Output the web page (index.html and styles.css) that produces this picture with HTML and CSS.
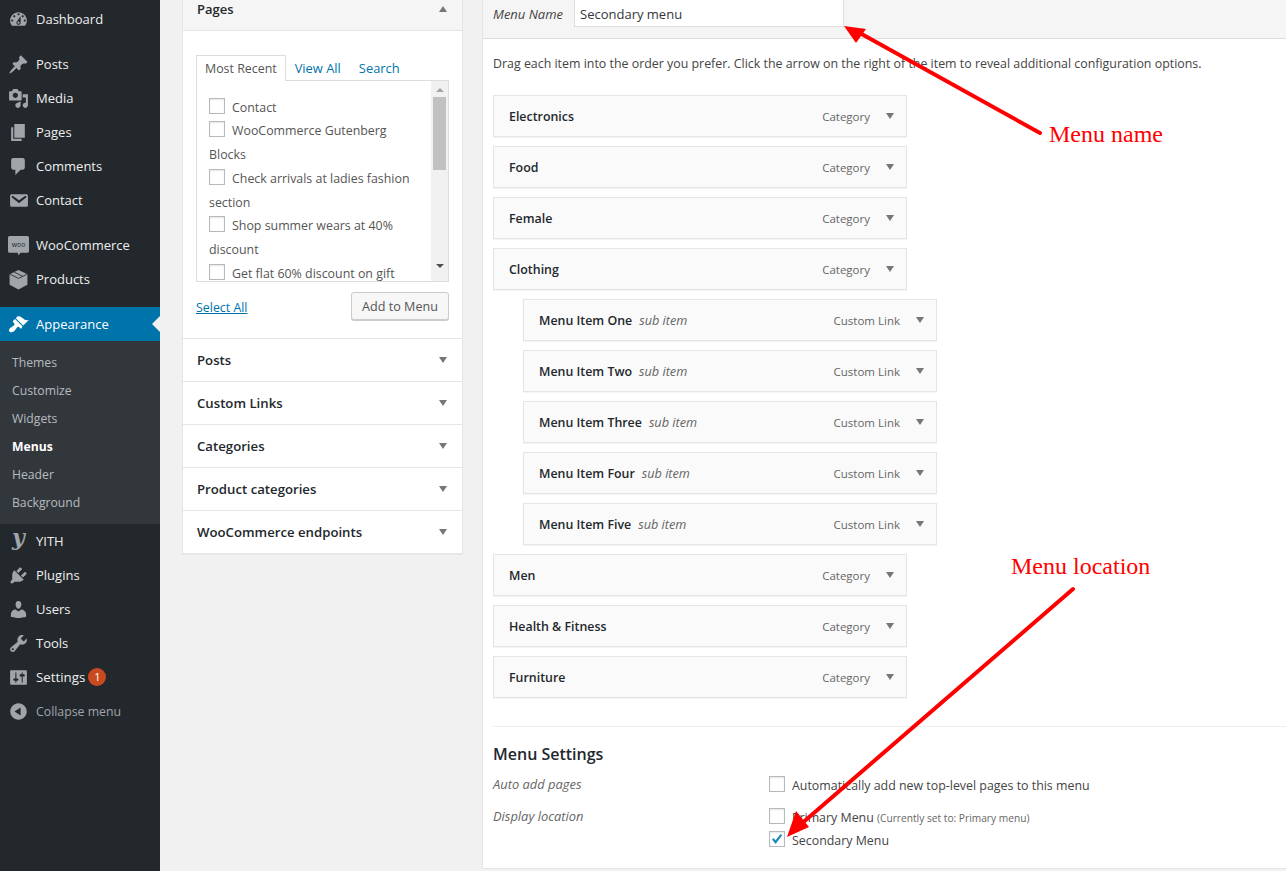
FILE: index.html
```html
<!DOCTYPE html>
<html lang="en">
<head>
<meta charset="utf-8">
<title>Menus</title>
<link rel="stylesheet" href="styles.css">
</head>
<body>
<div class="page">
  <nav class="sidebar">
    <a class="nav-item"><svg class="ico" viewBox="0 0 20 20"><path d="M3.76 16h12.48c1.1-1.37 1.76-3.11 1.76-5 0-4.42-3.58-8-8-8s-8 3.58-8 8c0 1.89.66 3.63 1.76 5zM10 4c.55 0 1 .45 1 1s-.45 1-1 1-1-.45-1-1 .45-1 1-1zM6 6c.55 0 1 .45 1 1s-.45 1-1 1-1-.45-1-1 .45-1 1-1zm8 0c.55 0 1 .45 1 1s-.45 1-1 1-1-.45-1-1 .45-1 1-1zm-5.37 5.55L12 7v6c0 1.1-.9 2-2 2s-2-.9-2-2c0-.57.24-1.08.63-1.45zM4 10c.55 0 1 .45 1 1s-.45 1-1 1-1-.45-1-1 .45-1 1-1zm12 0c.55 0 1 .45 1 1s-.45 1-1 1-1-.45-1-1 .45-1 1-1zm-5 3c0-.55-.45-1-1-1s-1 .45-1 1 .45 1 1 1 1-.45 1-1z"/></svg>Dashboard</a>
    <div class="nav-gap"></div>
    <a class="nav-item"><svg class="ico" viewBox="0 0 20 20"><path d="M10.44 3.02l1.82-1.82 6.36 6.35-1.83 1.82c-1.05-.68-2.48-.57-3.41.36l-.75.75c-.92.93-1.04 2.35-.35 3.41l-1.83 1.82-2.41-2.41-2.8 2.79c-.42.42-3.38 2.71-3.8 2.29s1.86-3.39 2.28-3.81l2.79-2.79L4.1 9.36l1.83-1.82c1.05.69 2.48.57 3.4-.36l.75-.75c.93-.92 1.05-2.35.36-3.41z"/></svg>Posts</a>
    <a class="nav-item"><svg class="ico" viewBox="0 0 20 20"><path d="M13 11V4c0-.55-.45-1-1-1h-1.67L9 1H5L3.67 3H2c-.55 0-1 .45-1 1v7c0 .55.45 1 1 1h10c.55 0 1-.45 1-1zM7 4.500c1.380 0 2.500 1.120 2.500 2.500S8.380 9.500 7 9.500 4.500 8.380 4.500 7 5.620 4.500 7 4.500zM14 6h5v10.500c0 1.380-1.120 2.500-2.500 2.500S14 17.880 14 16.500s1.120-2.500 2.500-2.500c.17 0 .34.02.5.05V9h-3V6zm-4 8.050V13h2v3.500c0 1.380-1.120 2.500-2.500 2.500S7 17.880 7 16.500 8.120 14 9.500 14c.17 0 .34.02.5.05z"/></svg>Media</a>
    <a class="nav-item"><svg class="ico" viewBox="0 0 20 20"><path d="M6 15V2h10v13H6zm-1 1h8v2H3V5h2v11z"/></svg>Pages</a>
    <a class="nav-item"><svg class="ico" viewBox="0 0 20 20"><path d="M5 2h9c1.1 0 2 .9 2 2v7c0 1.1-.9 2-2 2h-2l-5 5v-5H5c-1.1 0-2-.9-2-2V4c0-1.1.9-2 2-2z"/></svg>Comments</a>
    <a class="nav-item"><svg class="ico" viewBox="0 0 20 20"><path d="M3.87 4h13.25C18.37 4 19 4.59 19 5.79v8.42c0 1.19-.63 1.79-1.88 1.79H3.87c-1.25 0-1.88-.6-1.88-1.79V5.79c0-1.2.63-1.79 1.88-1.79zm6.62 8.6l6.74-5.53c.24-.2.43-.66.13-1.07-.29-.41-.82-.42-1.17-.17l-5.7 3.86L4.8 5.83c-.35-.25-.88-.24-1.17.17-.3.41-.11.87.13 1.07z"/></svg>Contact</a>
    <div class="nav-gap"></div>
    <a class="nav-item"><svg class="ico" viewBox="0 0 20 20"><path d="M1.500 1h17c.8 0 1.500.7 1.500 1.500v13c0 .8-.7 1.500-1.500 1.500H12l-2 2.400L9.200 17H1.500C.7 17 0 16.300 0 15.500v-13C0 1.700.7 1 1.500 1z"/><text class="woo-mark" x="10" y="11.500" text-anchor="middle">woo</text></svg>WooCommerce</a>
    <a class="nav-item"><svg class="ico" viewBox="0 0 20 20"><path d="M10 1l8.500 4v10L10 19.500 1.500 15V5z"/><path class="ico-cut" d="M2 5l8 4 8-4M6 3l8 4"/></svg>Products</a>
    <div class="nav-gap"></div>
    <a class="nav-item nav-current"><svg class="ico" viewBox="0 0 20 20"><path d="M14.48 11.06L7.41 3.99l1.5-1.5c.5-.56 2.3-.47 3.51.32 1.21.8 1.43 1.28 2.91 2.1 1.18.64 2.45 1.26 4.45.85zm-.71.71L6.7 4.7 4.93 6.47c-.39.39-.39 1.02 0 1.41l1.06 1.06c.39.39.39 1.03 0 1.42-.6.6-1.43 1.11-2.21 1.69-.35.26-.7.53-1.01.84C1.43 13.23.4 15.79 1.51 16.9s3.67-.13 5.01-1.27c.31-.31.58-.66.84-1.01.58-.78 1.09-1.61 1.69-2.21.39-.39 1.02-.39 1.41 0l1.06 1.06c.39.39 1.02.39 1.41 0z"/></svg>Appearance</a>
    <div class="submenu">
      <a class="sub-link">Themes</a>
      <a class="sub-link">Customize</a>
      <a class="sub-link">Widgets</a>
      <a class="sub-link sub-current">Menus</a>
      <a class="sub-link">Header</a>
      <a class="sub-link">Background</a>
    </div>
    <a class="nav-item"><svg class="ico" viewBox="0 0 20 20"><text class="yith-mark" x="10" y="13.500" text-anchor="middle">y</text></svg>YITH</a>
    <a class="nav-item"><svg class="ico" viewBox="0 0 20 20"><path d="M13.11 4.36L9.87 7.6 8 5.73l3.24-3.24c.35-.34 1.05-.2 1.56.32.52.51.66 1.21.31 1.55zm-8 1.77l.91-1.12 9.01 9.01-1.19.84c-.71.71-2.63 1.16-3.82 1.16H6.14L4.9 17.26c-.59.59-1.54.59-2.12 0-.59-.58-.59-1.53 0-2.12l1.24-1.24v-3.88c0-1.13.4-3.19 1.09-3.89zm7.26 3.97l3.24-3.24c.34-.35 1.04-.21 1.55.31.52.51.66 1.21.31 1.55l-3.24 3.25z"/></svg>Plugins</a>
    <a class="nav-item"><svg class="ico" viewBox="0 0 20 20"><path d="M10 9.250c-2.270 0-2.730-3.440-2.730-3.440C7 4.020 7.820 2 9.970 2c2.160 0 2.980 2.020 2.710 3.810 0 0-.41 3.440-2.680 3.440zm0 2.570L12.720 10c2.390 0 4.520 2.330 4.520 4.530v2.490s-3.650 1.130-7.240 1.130c-3.650 0-7.240-1.130-7.240-1.130v-2.490c0-2.250 1.940-4.480 4.470-4.480z"/></svg>Users</a>
    <a class="nav-item"><svg class="ico" viewBox="0 0 20 20"><path d="M16.680 9.770c-1.340 1.340-3.300 1.670-4.950.99l-5.410 6.520c-.99.99-2.590.99-3.580 0s-.99-2.590 0-3.570l6.520-5.420c-.68-1.650-.35-3.610.99-4.950 1.280-1.280 3.120-1.620 4.720-1.060l-2.890 2.890 2.820 2.820 2.860-2.870c.53 1.580.18 3.390-1.080 4.650zM3.810 16.210c.4.390 1.040.39 1.430 0 .4-.4.4-1.040 0-1.430-.39-.4-1.030-.4-1.430 0-.39.39-.39 1.030 0 1.430z"/></svg>Tools</a>
    <a class="nav-item"><svg class="ico" viewBox="0 0 20 20"><path d="M18 16V4c0-.55-.45-1-1-1H3c-.55 0-1 .45-1 1v12c0 .55.45 1 1 1h14c.55 0 1-.45 1-1zM8 11h1c.55 0 1 .45 1 1s-.45 1-1 1H8v1.500c0 .28-.22.5-.5.5s-.5-.22-.5-.5V13H6c-.55 0-1-.45-1-1s.45-1 1-1h1V5.500c0-.28.22-.5.5-.5s.5.22.5.5V11zm5-2h-1c-.55 0-1-.45-1-1s.45-1 1-1h1V5.500c0-.28.22-.5.5-.5s.5.22.5.5V7h1c.55 0 1 .45 1 1s-.45 1-1 1h-1v5.500c0 .28-.22.5-.5.5s-.5-.22-.5-.5V9z"/></svg><span class="nav-wide">Settings</span><span class="badge">1</span></a>
    <a class="nav-item nav-collapse"><svg class="ico" viewBox="0 0 20 20"><path d="M10 2.160c4.330 0 7.840 3.510 7.840 7.840s-3.510 7.840-7.840 7.840S2.160 14.330 2.160 10 5.710 2.160 10 2.160zm2 11.720V6.120L6.180 9.970z"/></svg><span class="collapse-label">Collapse menu</span></a>
  </nav>

  <main class="content">
    <aside class="accordion">
      <section class="acc-open">
        <header class="acc-head acc-head-open"><span>Pages</span><i class="tri tri-up"></i></header>
        <div class="acc-body">
          <div class="tabs">
            <span class="tab tab-active">Most Recent</span>
            <span class="tab">View All</span>
            <span class="tab">Search</span>
          </div>
          <div class="picker">
            <div class="picker-list">
              <div class="pick-row"><i class="cb"></i>Contact</div>
              <div class="pick-row"><i class="cb"></i>WooCommerce Gutenberg Blocks</div>
              <div class="pick-row"><i class="cb"></i>Check arrivals at ladies fashion section</div>
              <div class="pick-row"><i class="cb"></i>Shop summer wears at 40% discount</div>
              <div class="pick-row"><i class="cb"></i>Get flat 60% discount on gift</div>
            </div>
            <div class="scrollbar">
              <i class="tri-sm tri-sm-up"></i>
              <div class="thumb"></div>
              <i class="tri-sm tri-sm-down"></i>
            </div>
          </div>
          <div class="acc-actions">
            <a class="select-all">Select All</a>
            <span class="btn">Add to Menu</span>
          </div>
        </div>
      </section>
      <header class="acc-head"><span>Posts</span><i class="tri"></i></header>
      <header class="acc-head"><span>Custom Links</span><i class="tri"></i></header>
      <header class="acc-head"><span>Categories</span><i class="tri"></i></header>
      <header class="acc-head"><span>Product categories</span><i class="tri"></i></header>
      <header class="acc-head"><span>WooCommerce endpoints</span><i class="tri"></i></header>
    </aside>

    <section class="editor">
      <header class="editor-head">
        <label class="name-label">Menu Name</label>
        <div class="name-input">Secondary menu</div>
      </header>
      <div class="editor-body">
        <p class="instructions">Drag each item into the order you prefer. Click the arrow on the right of the item to reveal additional configuration options.</p>
        <div class="menu-items">
          <div class="mi"><b>Electronics</b><span class="mi-type">Category</span><i class="tri mi-tri"></i></div>
          <div class="mi"><b>Food</b><span class="mi-type">Category</span><i class="tri mi-tri"></i></div>
          <div class="mi"><b>Female</b><span class="mi-type">Category</span><i class="tri mi-tri"></i></div>
          <div class="mi"><b>Clothing</b><span class="mi-type">Category</span><i class="tri mi-tri"></i></div>
          <div class="mi mi-sub"><b>Menu Item One</b><em>sub item</em><span class="mi-type">Custom Link</span><i class="tri mi-tri"></i></div>
          <div class="mi mi-sub"><b>Menu Item Two</b><em>sub item</em><span class="mi-type">Custom Link</span><i class="tri mi-tri"></i></div>
          <div class="mi mi-sub"><b>Menu Item Three</b><em>sub item</em><span class="mi-type">Custom Link</span><i class="tri mi-tri"></i></div>
          <div class="mi mi-sub"><b>Menu Item Four</b><em>sub item</em><span class="mi-type">Custom Link</span><i class="tri mi-tri"></i></div>
          <div class="mi mi-sub"><b>Menu Item Five</b><em>sub item</em><span class="mi-type">Custom Link</span><i class="tri mi-tri"></i></div>
          <div class="mi"><b>Men</b><span class="mi-type">Category</span><i class="tri mi-tri"></i></div>
          <div class="mi"><b>Health &amp; Fitness</b><span class="mi-type">Category</span><i class="tri mi-tri"></i></div>
          <div class="mi"><b>Furniture</b><span class="mi-type">Category</span><i class="tri mi-tri"></i></div>
        </div>
        <div class="settings">
          <h3>Menu Settings</h3>
          <div class="set-row">
            <span class="set-label set-label-first">Auto add pages</span>
            <div class="set-opts">
              <div class="opt opt-auto"><i class="cb"></i>Automatically add new top-level pages to this menu</div>
            </div>
          </div>
          <div class="set-row set-row-loc">
            <span class="set-label">Display location</span>
            <div class="set-opts">
              <div class="opt opt-first"><i class="cb"></i>Primary Menu <small>(Currently set to: Primary menu)</small></div>
              <div class="opt opt-second"><i class="cb cb-on"><svg viewBox="0 0 16 16"><path d="M3 8.500l1.500-1.400 2 2.200L11.600 3 13.200 4.200 6.600 13z"/></svg></i>Secondary Menu</div>
            </div>
          </div>
        </div>
      </div>
    </section>
  </main>

  <svg class="marks" viewBox="0 0 1286 871">
    <path class="mark-line" d="M1040 133L858 32"/>
    <path class="mark-head" d="M844 26L866 29L856 43Z"/>
    <path class="mark-line" d="M1073 589L800 825"/>
    <path class="mark-head" d="M787 837L796 811L809 827Z"/>
  </svg>
  <span class="note note-name">Menu name</span>
  <span class="note note-loc">Menu location</span>
</div>
</body>
</html>
```
FILE: styles.css
```css
* { box-sizing: border-box; }
html, body { margin: 0; padding: 0; }
body { background: #f1f1f1; color: #444; font: 12.400px/1.4 "Open Sans", "Noto Sans", sans-serif; }
.page { position: relative; display: flex; width: 1286px; height: 871px; overflow: hidden; }

/* Sidebar */
.sidebar { width: 160px; flex: none; background: #23282d; padding-top: 2px; }
.nav-item { display: flex; align-items: center; height: 34px; padding-left: 8px; color: #eee; font-size: 13px; }
.ico { width: 21px; height: 21px; margin-right: 7px; flex: none; fill: #a0a5aa; overflow: visible; }
.ico-cut { fill: none; stroke: #23282d; stroke-width: .8; }
.woo-mark { fill: #23282d; font: 6.500px "Open Sans", sans-serif; }
.yith-mark { fill: #a0a5aa; font: italic 700 21px "DejaVu Serif", serif; }
.nav-gap { height: 11px; }
.nav-current { position: relative; background: #0073aa; color: #fff; }
.nav-current .ico { fill: #fff; }
.nav-current::after { content: ""; position: absolute; right: 0; top: 9px; border: 8px solid transparent; border-left-width: 0; border-right-color: #f1f1f1; }
.submenu { background: #32373c; height: 183px; padding-top: 8px; }
.sub-link { display: block; height: 28px; line-height: 28px; padding-left: 12px; color: rgba(240,245,250,.7); font-size: 12.200px; }
.sub-current { color: #fff; font-weight: 700; }
.nav-wide { font-size: 13.300px; }
.badge { display: inline-block; width: 18px; height: 18px; margin-left: 3px; border-radius: 50%; background: #ca4a1f; color: #fff; font-size: 11px; line-height: 18px; text-align: center; }
.nav-collapse { color: #a0a5aa; font-size: 12.300px; }
.collapse-label { padding-top: 2px; }

/* Content */
.content { flex: 1; display: flex; align-items: flex-start; padding-left: 22px; min-width: 0; }
.accordion { width: 281px; flex: none; margin-right: 19px; background: #fff; border: 1px solid #e5e5e5; border-top: 0; box-shadow: 0 1px 1px rgba(0,0,0,.04); }
.acc-head { display: flex; align-items: center; justify-content: space-between; height: 43px; padding: 0 14px; color: #23282d; font-weight: 600; font-size: 13.200px; border-bottom: 1px solid #e5e5e5; background: #fff; }
.accordion > .acc-head:last-child { height: 42px; border-bottom: 0; }
.acc-head-open { height: 31px; align-items: flex-start; background: #f5f5f5; font-size: 13px; }
.tri { width: 0; height: 0; border: 4px solid transparent; border-top: 6px solid #72777c; border-bottom: 0; margin-right: 1px; }
.tri-up { border-top: 0; border-bottom: 6px solid #72777c; margin-top: 6px; }
.acc-body { height: 308px; padding: 24px 13px 0; border-bottom: 1px solid #e5e5e5; }
.tabs { display: flex; height: 26px; position: relative; z-index: 1; }
.tab { padding: 0 9px; font-size: 12.900px; line-height: 27px; color: #0073aa; }
.tab-active { font-size: 12.400px; color: #555; background: #fff; border: 1px solid #ddd; border-bottom: 0; height: 26px; line-height: 25px; padding: 0 8px; }
.picker { display: flex; height: 202px; margin-top: -1px; border: 1px solid #ddd; overflow: hidden; }
.picker-list { flex: 1; padding: 14.600px 12px 0; color: #555; min-width: 0; }
.pick-row { line-height: 23.750px; }
.cb { display: inline-block; position: relative; width: 16px; height: 16px; margin-right: 7px; vertical-align: -2px; background: #fff; border: 1px solid #b4b9be; box-shadow: inset 0 1px 2px rgba(0,0,0,.1); }
.scrollbar { width: 17px; flex: none; background: #f1f1f1; display: flex; flex-direction: column; align-items: center; }
.thumb { width: 13px; height: 73px; margin-top: 5px; background: #c1c1c1; }
.tri-sm { width: 0; height: 0; border: 4px solid transparent; }
.tri-sm-up { border-top: 0; border-bottom: 4px solid #a3a3a3; margin-top: 7px; }
.tri-sm-down { border-bottom: 0; border-top: 4px solid #505050; margin-top: 94px; }
.acc-actions { display: flex; align-items: center; justify-content: space-between; margin-top: 10px; }
.select-all { margin-top: 4px; color: #0073aa; text-decoration: underline; }
.btn { width: 98px; height: 28px; line-height: 27px; font-size: 12.600px; text-align: center; color: #555; background: #f7f7f7; border: 1px solid #ccc; border-radius: 3px; box-shadow: 0 1px 0 #ccc; }

/* Editor */
.editor { flex: 1; min-width: 0; height: 869px; background: #fff; border-left: 1px solid #e5e5e5; border-bottom: 1px solid #e5e5e5; }
.editor-head { display: flex; align-items: flex-start; height: 39px; padding-left: 10px; background: #f5f5f5; border-bottom: 1px solid #ddd; }
.name-label { width: 81px; font-size: 13px; line-height: 28px; font-style: italic; color: #444; }
.name-input { width: 270px; height: 27px; padding-left: 5px; font-size: 13px; line-height: 28px; background: #fff; border: 1px solid #ddd; border-top: 0; color: #32373c; }
.editor-body { padding: 0 0 0 10px; }
.instructions { margin: 15px 0 21px; line-height: 20px; color: #444; }
.menu-items { display: flex; flex-direction: column; gap: 9px; }
.mi { display: flex; align-items: center; width: 414px; height: 42px; padding-left: 15px; background: #fafafa; border: 1px solid #e5e5e5; box-shadow: 0 1px 1px rgba(0,0,0,.04); }
.mi b { margin-top: 2px; color: #23282d; font-weight: 600; }
.mi em { margin-top: 2px; margin-left: 7px; font-size: 12.700px; color: #666; }
.mi-sub { margin-left: 30px; }
.mi-type { margin-left: auto; margin-top: 2px; font-size: 11.500px; color: #666; }
.mi-tri { margin: 0 12px 0 16px; }
.settings { margin-top: 28px; border-top: 1px solid #eee; }
.settings h3 { margin: 16px 0 0; font-size: 16px; line-height: 22px; font-weight: 600; color: #23282d; }
.set-row { display: flex; margin-top: 10px; }
.set-label { width: 276px; flex: none; font-size: 12.900px; font-style: italic; color: #666; line-height: 20px; }
.set-label-first { margin-top: -1px; }
.opt { line-height: 20px; }
.opt small { font-size: 10.200px; color: #666; }
.opt-auto { padding-top: 1px; }
.opt-first { padding-top: 2px; }
.opt-second { margin-top: 3px; }
.cb-on svg { position: absolute; left: -1px; top: -1px; width: 16px; height: 16px; fill: #1e8cbe; }

/* Annotations over the screenshot */
.marks { position: absolute; left: 0; top: 0; width: 1286px; height: 871px; pointer-events: none; }
.mark-line { fill: none; stroke: #f00; stroke-width: 4; stroke-linecap: round; }
.mark-head { fill: #f00; }
.note { position: absolute; color: #f00; font: 24px/28px "Liberation Serif", serif; white-space: nowrap; }
.note-name { left: 1049px; top: 120px; }
.note-loc { left: 1011px; top: 552px; }
```
